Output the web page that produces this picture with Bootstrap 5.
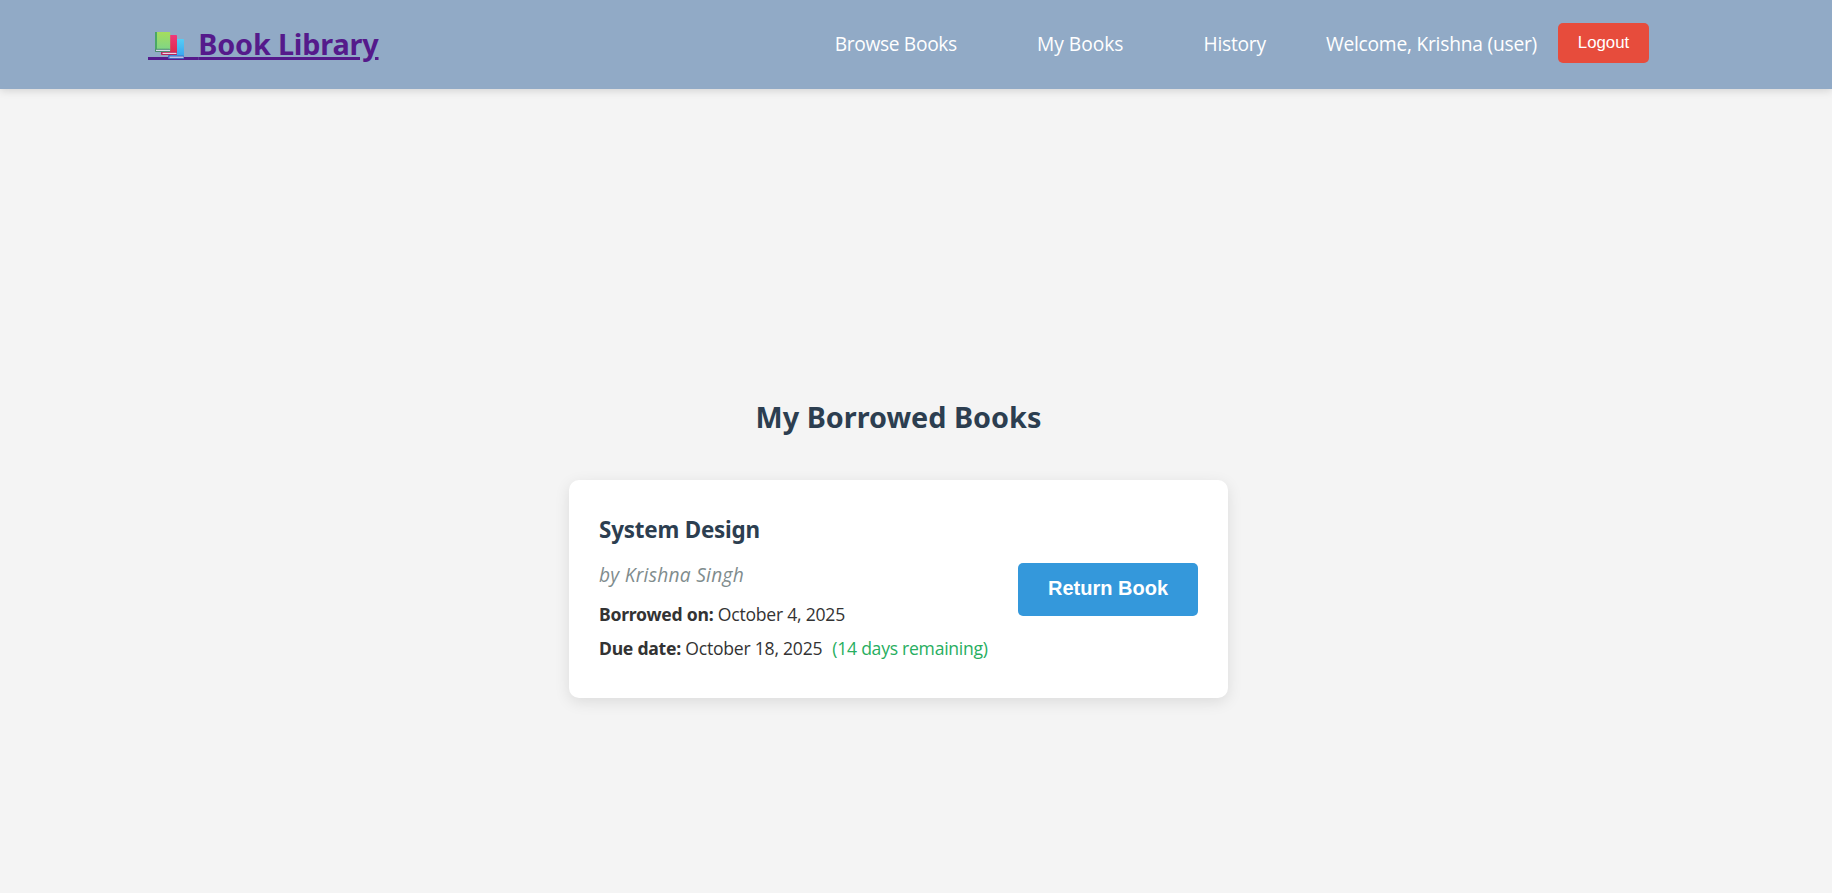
<!DOCTYPE html>
<html lang="en">
<head>
<meta charset="utf-8">
<meta name="viewport" content="width=device-width, initial-scale=1">
<title>Book Library</title>
<link href="https://cdn.jsdelivr.net/npm/bootstrap@5.3.0/dist/css/bootstrap.min.css" rel="stylesheet">
<style>
  body { background: #f4f4f4; color: #333; font-family: "Open Sans", "Noto Sans", sans-serif; min-height: 100vh; }
  .topbar { height: 89px; padding: 0 35px 1px 0; background: #91aac6; box-shadow: 0 2px 8px rgba(0,0,0,.13); }
  .topbar-inner { width: 1501px; }
  .logo, .logo:hover { color: #551a8b; font: 700 28.8px/40px "Noto Sans", sans-serif; letter-spacing: -.17px; text-decoration: underline; text-decoration-thickness: 3px; text-underline-offset: 2px; }
  .logo-gap { letter-spacing: 42.8px; }
  .logo svg { left: 6px; top: 7px; }
  .menu { font-size: 19.2px; line-height: 30px; color: #fff; }
  .menu a { color: #fff; text-decoration: none; white-space: nowrap; }
  .menu-links { gap: 80px; margin-right: 60px; }
  .tight { letter-spacing: -.34px; }
  .snug { letter-spacing: -.22px; }
  .btn-logout, .btn-return { border: 0; border-radius: 5px; color: #fff; font-family: "Liberation Sans", Arial, sans-serif; }
  .btn-logout { width: 91px; height: 40px; padding: 0; margin: 0 0 2px 21px; background: #e74c3c; font-size: 16.8px; line-height: 40px; }
  .btn-return { width: 180px; height: 53px; padding: 0 0 2px; background: #3498db; font-size: 20px; font-weight: 700; }
  .page { padding: 308px 35px 0 0; }
  .page h1 { font: 700 28.8px/40px "Noto Sans", sans-serif; color: #2c3e50; margin: 0 0 43px; }
  .loan { width: 659px; height: 218px; padding: 0 30px; border: 0; border-radius: 10px; background: #fff; box-shadow: 0 4px 15px rgba(0,0,0,.1); }
  .loan h2 { font: 700 22.4px/30px "Noto Sans", sans-serif; letter-spacing: -.2px; color: #2c3e50; margin: 0 0 15px; }
  .author { font-size: 19.2px; line-height: 30px; font-style: italic; letter-spacing: .26px; color: #7f8c8d; margin: 0 0 9px; }
  .dates { font-size: 17.6px; line-height: 30px; letter-spacing: -.24px; margin: 0 0 4px; white-space: nowrap; }
  .dates strong { font-family: "Noto Sans", sans-serif; font-weight: 700; }
  .left-days { color: #27ae60; margin-left: 10px; letter-spacing: -.27px; }
</style>
</head>
<body>
<header class="topbar d-flex justify-content-center">
  <div class="topbar-inner d-flex align-items-center justify-content-between">
    <a href="#" class="logo position-relative text-nowrap"><span class="logo-gap">&nbsp;</span>Book Library<svg class="position-absolute" width="32" height="30" viewBox="0 0 32 30" aria-hidden="true">
      <defs>
        <linearGradient id="g1" x2="0" y2="1"><stop stop-color="#a5dd5c"/><stop offset="1" stop-color="#7bd48b"/></linearGradient>
        <linearGradient id="g2" x2="0" y2="1"><stop stop-color="#f0387a"/><stop offset="1" stop-color="#dd2947"/></linearGradient>
        <linearGradient id="g3" x2="0" y2="1"><stop stop-color="#56cdf5"/><stop offset="1" stop-color="#359ff0"/></linearGradient>
      </defs>
      <rect x="14.5" y="8" width="15.5" height="19.5" rx=".7" fill="url(#g3)"/>
      <rect x="14.5" y="8" width="1.8" height="19.5" fill="#2f78cc"/>
      <rect x="14" y="24.5" width="16" height="3.3" rx="1" fill="#416ac0"/>
      <rect x="15.5" y="25.6" width="14" height="1.2" fill="#d9d9f2"/>
      <rect x="7.5" y="4" width="15.5" height="19.5" rx=".7" fill="url(#g2)"/>
      <rect x="7.5" y="4" width="1.8" height="19.5" fill="#b21c52"/>
      <rect x="7" y="20.7" width="16" height="3.2" rx="1" fill="#b8255c"/>
      <rect x="8.5" y="21.8" width="14" height="1.2" fill="#efd5e5"/>
      <rect x="1" y="1" width="15.2" height="19.5" rx=".7" fill="url(#g1)"/>
      <rect x="1" y="1" width="2" height="19.5" fill="#4aa866"/>
      <rect x="1" y="17.7" width="15.2" height="3.2" rx="1" fill="#4c8c70"/>
      <rect x="2" y="18.8" width="14" height="1.2" fill="#dcdcec"/>
    </svg></a>
    <nav class="menu d-flex align-items-center">
      <div class="menu-links d-flex">
        <a href="#" class="tight">Browse Books</a>
        <a href="#">My Books</a>
        <a href="#" class="snug">History</a>
      </div>
      <span class="snug text-nowrap">Welcome, Krishna (user)</span>
      <button type="button" class="btn btn-logout">Logout</button>
    </nav>
  </div>
</header>
<main class="page d-flex flex-column align-items-center">
  <h1>My Borrowed Books</h1>
  <section class="card loan d-flex flex-row align-items-center justify-content-between">
    <div>
      <h2>System Design</h2>
      <p class="author">by Krishna Singh</p>
      <p class="dates"><strong>Borrowed on:</strong> October 4, 2025</p>
      <p class="dates mb-0"><strong>Due date:</strong> October 18, 2025<span class="left-days">(14 days remaining)</span></p>
    </div>
    <button type="button" class="btn btn-return">Return Book</button>
  </section>
</main>
<script src="https://cdn.jsdelivr.net/npm/bootstrap@5.3.0/dist/js/bootstrap.bundle.min.js"></script>
</body>
</html>
